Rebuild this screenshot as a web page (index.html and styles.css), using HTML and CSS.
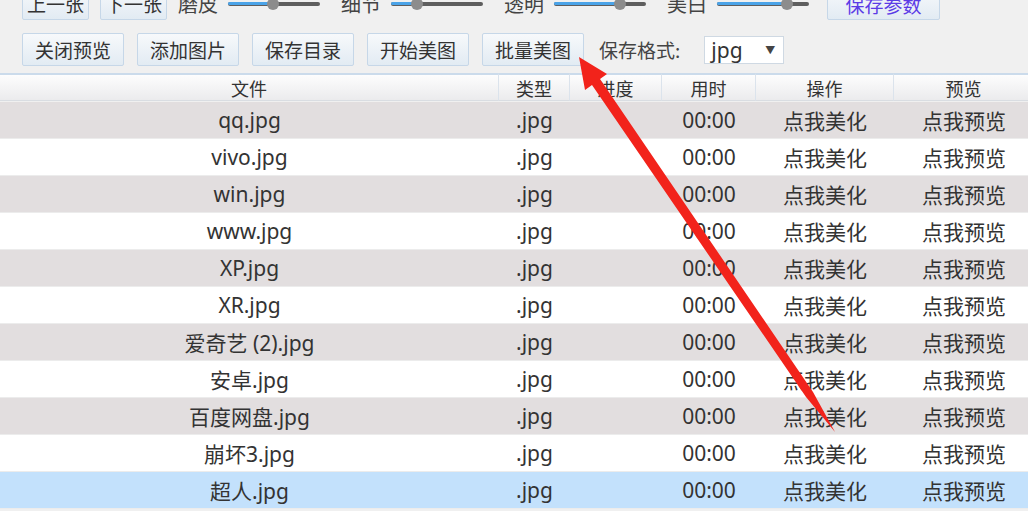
FILE: index.html
```html
<html><head>
    <title>批量美图</title>
    <meta charset="UTF-8">
    <meta name="viewport" content="width=device-width, initial-scale=1">
    <link rel="stylesheet" href="styles.css">
</head>
<body>
  <div class="bar top">
    <button class="btn small">上一张</button>
    <button class="btn small">下一张</button>
    <span class="lbl first">磨皮</span>
    <div class="slider"><div class="fill" style="width:45px"></div><div class="knob" style="left:45px"></div></div>
    <span class="lbl">细节</span>
    <div class="slider"><div class="fill" style="width:26px"></div><div class="knob" style="left:26px"></div></div>
    <span class="lbl">透明</span>
    <div class="slider"><div class="fill" style="width:66px"></div><div class="knob" style="left:66px"></div></div>
    <span class="lbl">美白</span>
    <div class="slider"><div class="fill" style="width:70px"></div><div class="knob" style="left:70px"></div></div>
    <button class="btn save">保存参数</button>
  </div>
  <div class="bar second">
    <button class="btn">关闭预览</button>
    <button class="btn">添加图片</button>
    <button class="btn">保存目录</button>
    <button class="btn">开始美图</button>
    <button class="btn">批量美图</button>
    <span class="lbl fmt">保存格式:</span>
    <div class="select"><span>jpg</span><span class="caret">▼</span></div>
  </div>
  <div class="grid">
    <div class="head">文件</div><div class="head">类型</div><div class="head">进度</div><div class="head">用时</div><div class="head">操作</div><div class="head">预览</div>
  </div>
  <div id="rows"></div>
  <svg class="arrow" width="1028" height="511" viewBox="0 0 1028 511">
    <polygon points="579,57 607,74 600,79 813,392 835,432 806,397 592,85 585,90" fill="#f2231b"/>
  </svg>
  <script>
    var files = ["qq.jpg", "vivo.jpg", "win.jpg", "www.jpg", "XP.jpg", "XR.jpg",
      "爱奇艺 (2).jpg", "安卓.jpg", "百度网盘.jpg", "崩坏3.jpg", "超人.jpg"];
    var html = "";
    for (var i = 0; i < files.length; i++) {
      var cls = i == files.length - 1 ? "row sel" : (i % 2 == 0 ? "row odd" : "row");
      html += '<div class="grid ' + cls + '"><div>' + files[i] + '</div><div>.jpg</div><div></div>' +
        '<div>00:00</div><div>点我美化</div><div>点我预览</div></div>';
    }
    document.getElementById("rows").innerHTML = html;
  </script>
</body></html>
```

FILE: styles.css
```css
body {
  margin: 0;
  background: #f0f0f0;
  font-family: "Noto Sans", "Noto Sans CJK SC", sans-serif;
  color: #333;
  overflow: hidden;
  position: relative;
  width: 1028px;
  height: 511px;
}
.bar {
  display: flex;
  align-items: center;
  padding-left: 22px;
  height: 33px;
}
.top {
  margin-top: -13px;
}
.second {
  margin-top: 13px;
  gap: 13px;
}
.btn {
  font-family: "Noto Sans CJK SC", sans-serif;
  font-size: 19px;
  color: #333;
  height: 33px;
  width: 102px;
  padding: 0;
  border: 1px solid #c6d7e8;
  border-radius: 2px;
  background: linear-gradient(#f7f9fb, #e2ebf3);
  line-height: 31px;
}
.small {
  width: 67px;
  margin-right: 11px;
}
.save {
  width: 113px;
  margin-left: 18px;
  color: #5b3be6;
  height: 32px;
}
.lbl {
  font-family: "Noto Sans CJK SC", sans-serif;
  font-size: 20px;
  color: #444;
  margin: 0 10px 0 21px;
  line-height: 24px;
}
.lbl.first {
  margin-left: 0;
}
.lbl.fmt {
  font-size: 19px;
  margin: 0 11px 0 2px;
}
.slider {
  position: relative;
  width: 92px;
  height: 4px;
  background: #5e5e5e;
  border-radius: 2px;
}
.fill {
  height: 3px;
  background: #4aa3e8;
  border-radius: 2px;
}
.knob {
  position: absolute;
  top: -4px;
  width: 12px;
  height: 12px;
  margin-left: -6px;
  border-radius: 50%;
  background: #8c8c8c;
}
.select {
  width: 80px;
  height: 28px;
  box-sizing: border-box;
  background: #fff;
  border: 1px solid #cfd9e3;
  display: flex;
  align-items: center;
  justify-content: space-between;
  padding: 0 8px 0 6px;
  font-size: 21px;
  color: #333;
}
.caret {
  font-size: 10px;
  color: #444;
}
.grid {
  display: grid;
  grid-template-columns: 499px 71px 92px 94px 138px 140px;
  width: 1034px;
}
.grid > div {
  display: flex;
  align-items: center;
  justify-content: center;
}
.head {
  margin-top: 7px;
  height: 25px;
  border-top: 2px solid #cbdbeb;
  border-bottom: 1px solid #d9dde2;
  border-right: 1px solid #dbe3ec;
  background: linear-gradient(#fdfdfd, #ebebed);
  font-family: "Noto Sans CJK SC", sans-serif;
  font-size: 18px;
  color: #333;
  box-sizing: content-box;
}
#rows {
  margin-top: 1px;
}
.row {
  height: 36px;
  border-bottom: 1px solid #ececec;
  background: #fff;
  font-size: 21px;
  color: #333;
}
.row.odd {
  background: #e2dedf;
}
.row.sel {
  background: #c3e1fc;
}
.arrow {
  position: absolute;
  left: 0;
  top: 0;
}
```
